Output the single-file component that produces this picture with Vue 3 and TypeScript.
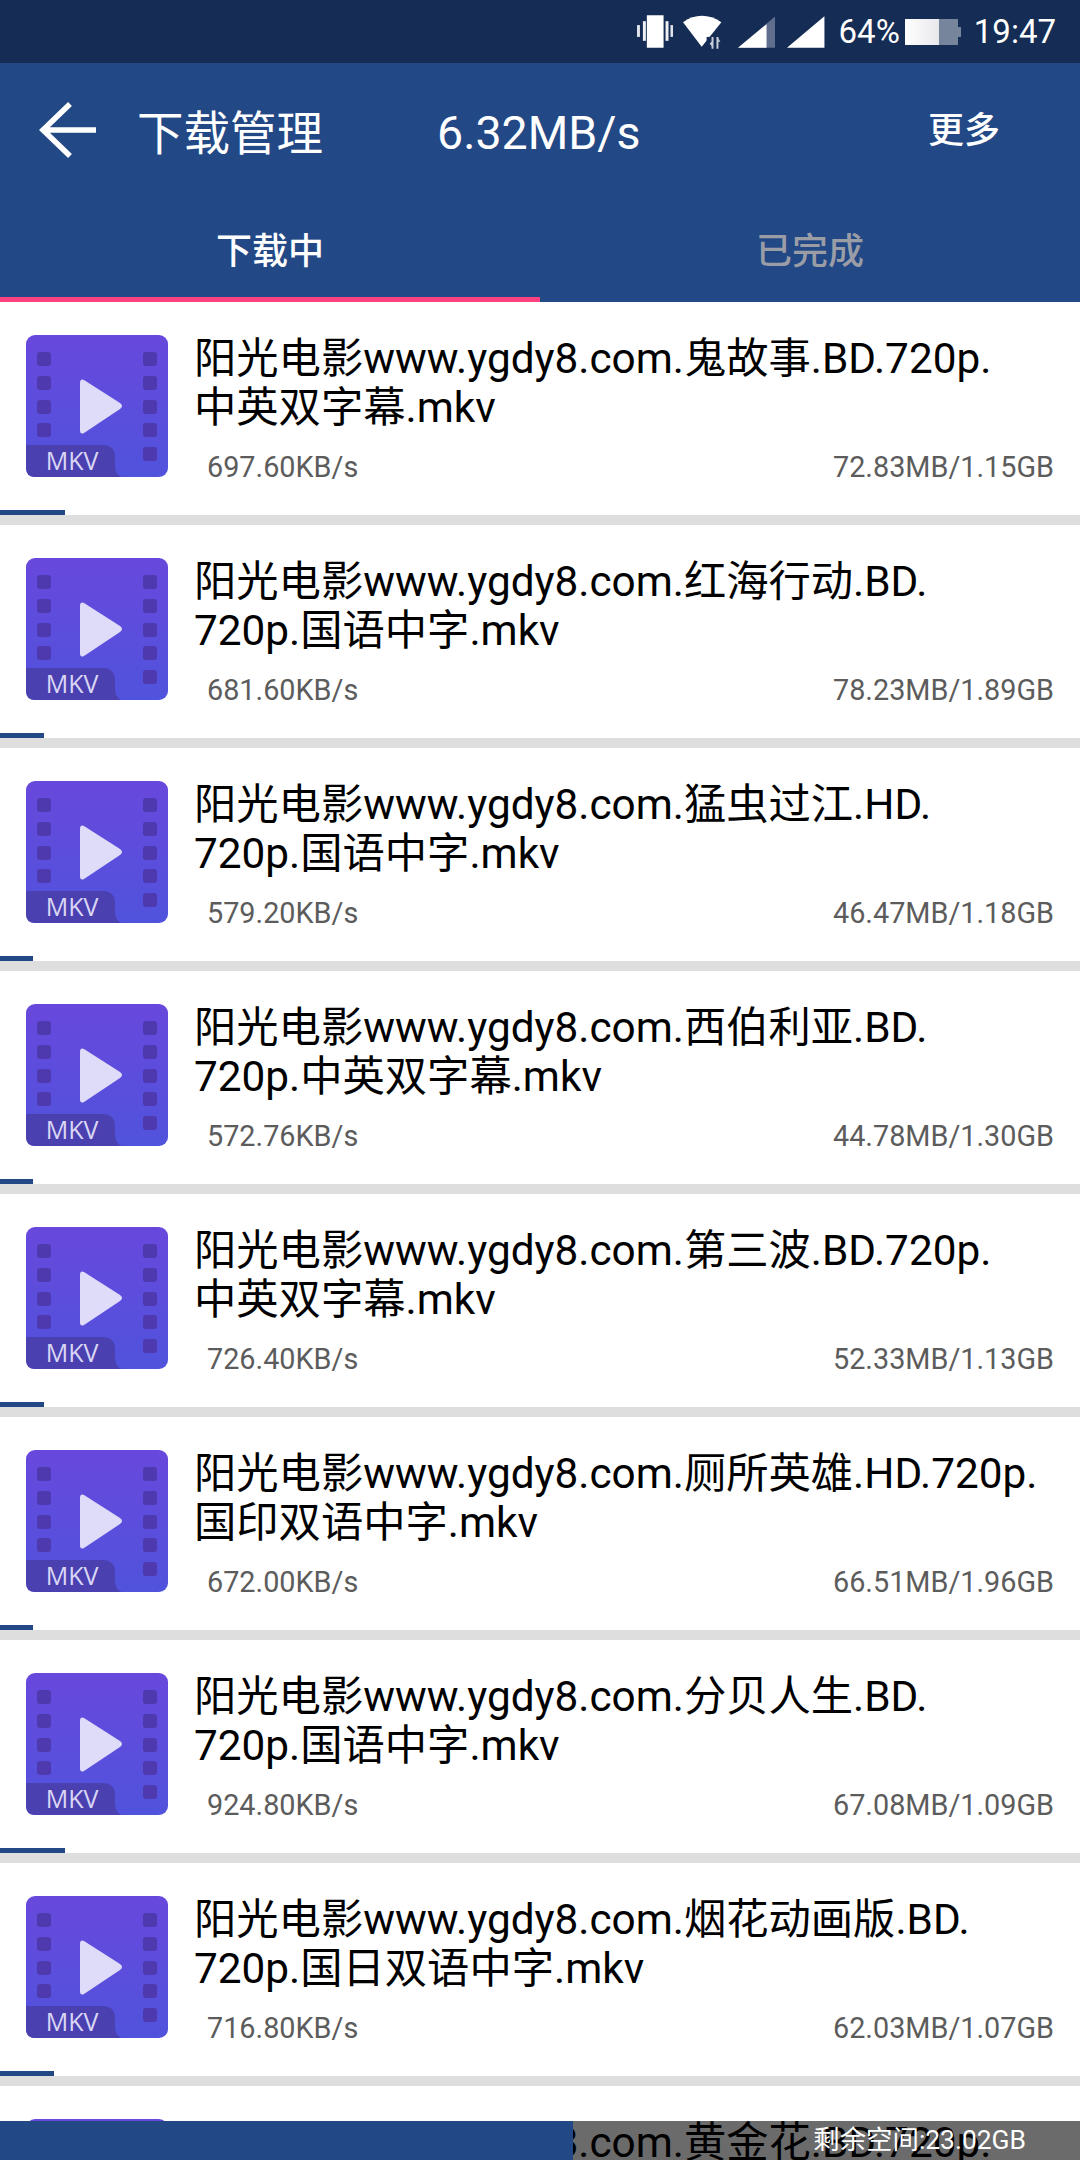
<script setup lang="ts">
interface Task {
  lines: string[]
  speed: string
  size: string
  progress: number
}

const prefix = '阳光电影www.ygdy8.com.'

const tasks: Task[] = [
  { lines: [prefix + '鬼故事.BD.720p.', '中英双字幕.mkv'], speed: '697.60KB/s', size: '72.83MB/1.15GB', progress: 65 },
  { lines: [prefix + '红海行动.BD.', '720p.国语中字.mkv'], speed: '681.60KB/s', size: '78.23MB/1.89GB', progress: 44 },
  { lines: [prefix + '猛虫过江.HD.', '720p.国语中字.mkv'], speed: '579.20KB/s', size: '46.47MB/1.18GB', progress: 33 },
  { lines: [prefix + '西伯利亚.BD.', '720p.中英双字幕.mkv'], speed: '572.76KB/s', size: '44.78MB/1.30GB', progress: 33 },
  { lines: [prefix + '第三波.BD.720p.', '中英双字幕.mkv'], speed: '726.40KB/s', size: '52.33MB/1.13GB', progress: 44 },
  { lines: [prefix + '厕所英雄.HD.720p.', '国印双语中字.mkv'], speed: '672.00KB/s', size: '66.51MB/1.96GB', progress: 33 },
  { lines: [prefix + '分贝人生.BD.', '720p.国语中字.mkv'], speed: '924.80KB/s', size: '67.08MB/1.09GB', progress: 65 },
  { lines: [prefix + '烟花动画版.BD.', '720p.国日双语中字.mkv'], speed: '716.80KB/s', size: '62.03MB/1.07GB', progress: 54 },
  // only the top of this row shows above the footer
  { lines: [prefix + '黄金花.BD.720p.'], speed: '', size: '', progress: 0 },
]

const leftHoles = [17, 41, 65, 88]
const rightHoles = [17, 41, 65, 88, 112]
</script>

<template>
  <div class="screen">
    <div class="status">
      <svg class="st-vibrate" width="37" height="33" viewBox="0 0 37 33">
        <rect x="10" y="0" width="17" height="33" fill="#fff" />
        <rect x="0" y="10" width="3" height="12" fill="#dfe3ea" />
        <rect x="6" y="6" width="3" height="20" fill="#eef0f4" />
        <rect x="29" y="6" width="3" height="20" fill="#eef0f4" />
        <rect x="34" y="10" width="3" height="12" fill="#dfe3ea" />
      </svg>
      <svg class="st-wifi" width="42" height="34" viewBox="0 0 42 34">
        <path d="M0 7 Q19 -6 39 7 L19 32 Z" fill="#fff" />
        <path d="M24 22 H42 V34 H24 Z" fill="#152c54" />
        <path d="M30 22v12M35 22v12" stroke="#c8ced9" stroke-width="2" fill="none" />
        <path d="M27 29l3-3v6zM38 27l-3-5v5z" fill="#c8ced9" />
      </svg>
      <svg class="st-signal" width="38" height="32" viewBox="0 0 38 32">
        <path d="M0 32 L38 0 V32 Z" fill="#5e6e8c" />
        <path d="M0 32 L29 8 V32 Z" fill="#fff" />
      </svg>
      <svg class="st-signal2" width="38" height="32" viewBox="0 0 38 32">
        <path d="M0 32 L38 0 V32 Z" fill="#fff" />
      </svg>
      <span class="st-pct">64%</span>
      <div class="st-battery">
        <div class="st-batt-body"><div class="st-batt-level"></div></div>
        <div class="st-batt-cap"></div>
      </div>
      <span class="st-time">19:47</span>
    </div>

    <header class="toolbar">
      <svg class="back" width="58" height="56" viewBox="0 0 58 56">
        <path d="M57 28 H5 M31 2 L4 28 L31 54" fill="none" stroke="#fff" stroke-width="5.5" />
      </svg>
      <span class="title">下载管理</span>
      <span class="speed">6.32MB/s</span>
      <span class="more">更多</span>
    </header>

    <nav class="tabs">
      <div class="tab active">下载中</div>
      <div class="tab">已完成</div>
    </nav>

    <div class="list">
      <div v-for="t in tasks" :key="t.lines[0]" class="item">
        <div class="item-body">
          <svg class="file-icon" width="142" height="142" viewBox="0 0 142 142">
            <defs>
              <linearGradient id="filmBg" x1="0" y1="0" x2="0" y2="1">
                <stop offset="0" stop-color="#6848dc" />
                <stop offset="1" stop-color="#5053dc" />
              </linearGradient>
            </defs>
            <rect width="142" height="142" rx="9" fill="url(#filmBg)" />
            <rect v-for="y in leftHoles" :key="'l' + y" x="11" :y="y" width="14" height="14" rx="3" fill="#4f39ae" />
            <rect v-for="y in rightHoles" :key="'r' + y" x="117" :y="y" width="14" height="14" rx="3" fill="#4f39ae" />
            <path d="M54 48 Q54 43 58 45 L94 68 Q98 71 94 74 L58 98 Q54 100 54 95 Z" fill="#dfdcf9" />
            <path d="M0 110 H76 Q89 110 89 122 V130 Q89 140 96 142 H9 Q0 142 0 133 Z" fill="#4a40b0" />
            <text x="46" y="135" text-anchor="middle" class="ext">MKV</text>
          </svg>
          <div class="info">
            <div v-for="line in t.lines" :key="line" class="name">{{ line }}</div>
            <div v-if="t.speed" class="meta">
              <span>{{ t.speed }}</span>
              <span>{{ t.size }}</span>
            </div>
          </div>
        </div>
        <div class="progress" :style="{ width: t.progress + 'px' }"></div>
        <div class="divider"></div>
      </div>
    </div>

    <footer class="foot">
      <div class="foot-used"></div>
      <div class="foot-free">剩余空间:23.02GB</div>
    </footer>
  </div>
</template>

<style scoped>
.screen {
  position: relative;
  width: 1080px;
  height: 2160px;
  overflow: hidden;
  background: #fff;
  font-family: Roboto, "Noto Sans CJK SC", sans-serif;
}

.status {
  height: 63px;
  background: #152c54;
  display: flex;
  align-items: center;
  color: #fff;
  padding: 0 24px 0 637px;
  box-sizing: border-box;
}

.st-wifi {
  margin-left: 10px;
}

.st-signal {
  margin-left: 13px;
}

.st-signal2 {
  margin-left: 12px;
}

.st-pct {
  font-size: 33px;
  margin-left: 14px;
}

.st-battery {
  display: flex;
  align-items: center;
  margin-left: 5px;
}

.st-batt-body {
  width: 53px;
  height: 26px;
  background: #76849c;
}

.st-batt-level {
  width: 64%;
  height: 100%;
  background: linear-gradient(90deg, #fff, #e8e8ec);
}

.st-batt-cap {
  width: 3px;
  height: 10px;
  background: #76849c;
}

.st-time {
  font-size: 33px;
  margin-left: 13px;
}

.toolbar {
  height: 144px;
  background: #224886;
  display: flex;
  align-items: center;
  color: #fff;
  box-sizing: border-box;
  padding-left: 39px;
  padding-bottom: 10px;
}

.title {
  font-size: 46.5px;
  margin-left: 40px;
  margin-bottom: 2px;
}

.speed {
  font-size: 46.5px;
  margin-left: 114px;
  margin-top: 6px;
}

.more {
  font-size: 36px;
  font-weight: 500;
  margin-left: auto;
  margin-right: 80px;
  margin-bottom: 6px;
}

.tabs {
  height: 95px;
  background: #224886;
  display: flex;
}

.tab {
  width: 540px;
  box-sizing: border-box;
  display: flex;
  align-items: center;
  justify-content: center;
  font-size: 36px;
  font-weight: 500;
  color: #9a9da6;
  padding-bottom: 13px;
}

.tab.active {
  color: #fff;
  border-bottom: 5px solid #ff4081;
  padding-bottom: 8px;
}

.item {
  height: 223px;
  display: flex;
  flex-direction: column;
}

.item-body {
  flex: 1;
  display: flex;
  padding: 33px 26px 0;
  min-height: 0;
}

.file-icon {
  flex: none;
}

.ext {
  font-size: 25px;
  fill: #d9d6f5;
  font-family: "Open Sans", Roboto, sans-serif;
}

.info {
  flex: 1;
  margin-left: 26px;
  min-width: 0;
}

.name {
  font-size: 42.3px;
  line-height: 48.5px;
  color: #000;
  white-space: nowrap;
}

.meta {
  display: flex;
  justify-content: space-between;
  font-size: 28.8px;
  color: #5c5c5c;
  margin-top: 18px;
  padding-left: 13px;
}

.progress {
  height: 5px;
  background: #224886;
  flex: none;
}

.divider {
  height: 10px;
  background: #dedede;
  flex: none;
}

.foot {
  position: absolute;
  left: 0;
  right: 0;
  bottom: 0;
  height: 39px;
  display: flex;
}

.foot-used {
  width: 573px;
  background: #224886;
}

.foot-free {
  flex: 1;
  background: rgba(0, 0, 0, 0.58);
  color: #fff;
  font-size: 26.4px;
  line-height: 39px;
  text-align: right;
  padding-right: 54px;
}
</style>
